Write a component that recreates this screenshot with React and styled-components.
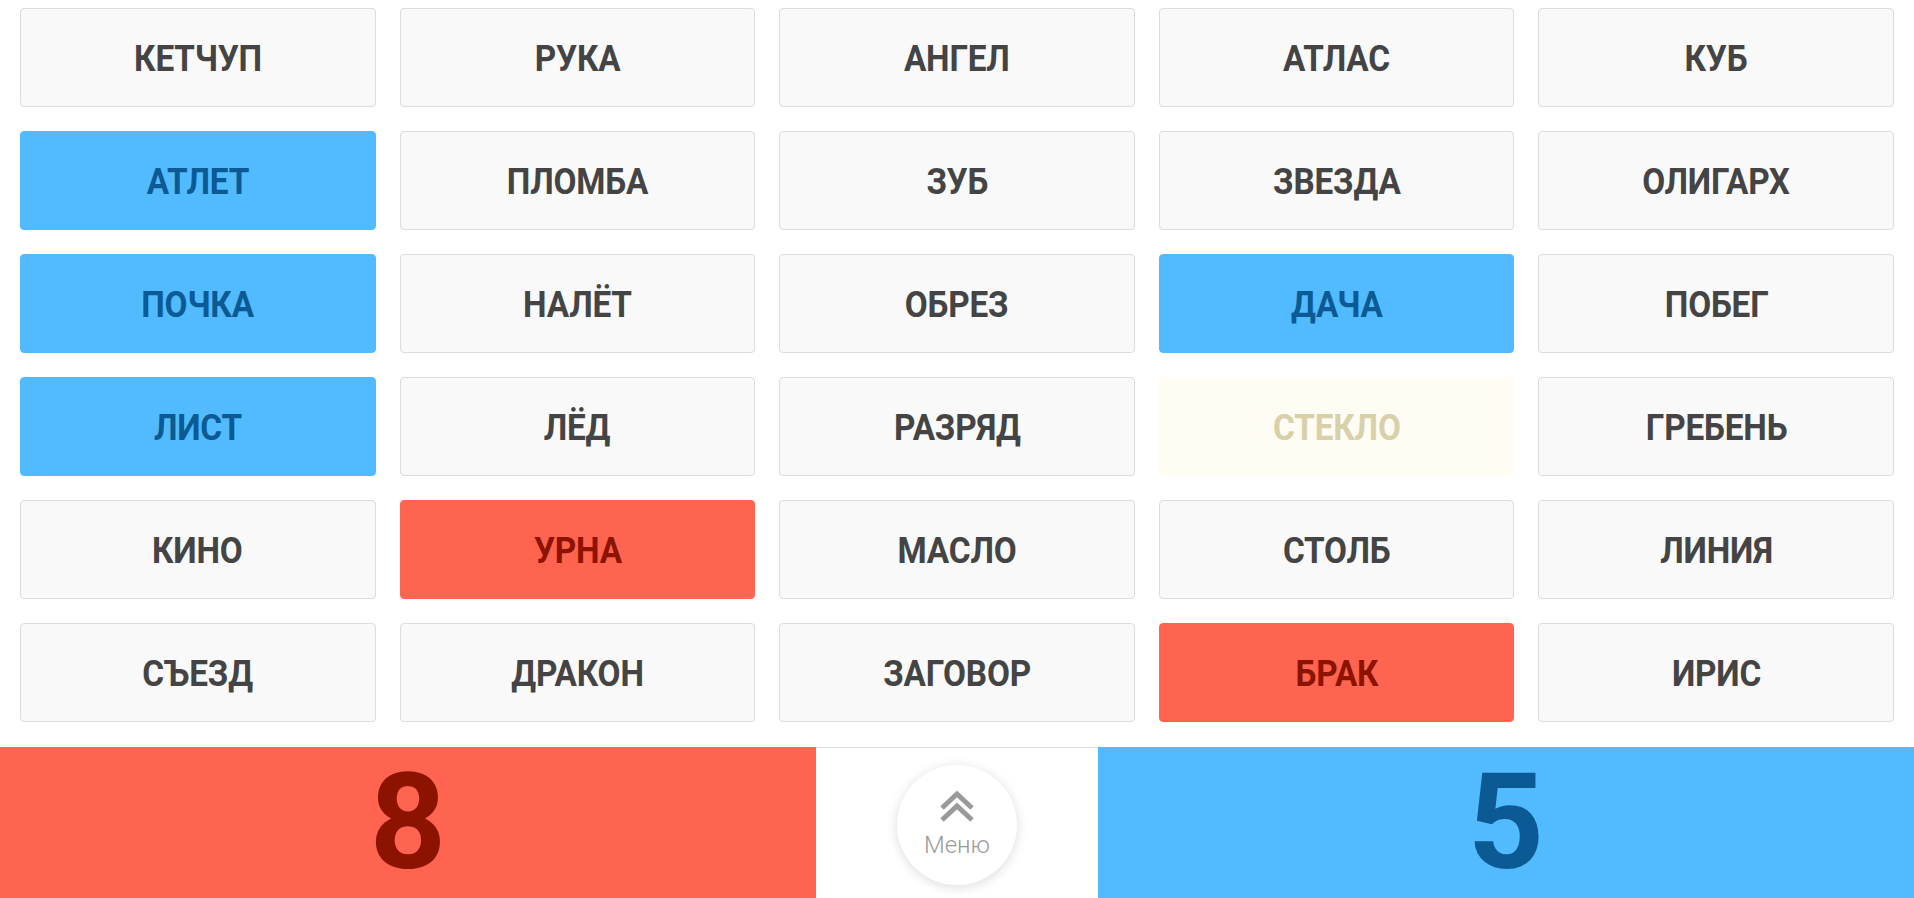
import styled, { createGlobalStyle } from 'styled-components';

const GlobalStyle = createGlobalStyle`
  html, body {
    margin: 0;
    padding: 0;
    background: #fff;
  }
  body {
    font-family: Roboto, "Noto Sans", "DejaVu Sans", sans-serif;
  }
  * {
    box-sizing: border-box;
  }
`;

const words = [
  ['КЕТЧУП', null], ['РУКА', null], ['АНГЕЛ', null], ['АТЛАС', null], ['КУБ', null],
  ['АТЛЕТ', 'blue'], ['ПЛОМБА', null], ['ЗУБ', null], ['ЗВЕЗДА', null], ['ОЛИГАРХ', null],
  ['ПОЧКА', 'blue'], ['НАЛЁТ', null], ['ОБРЕЗ', null], ['ДАЧА', 'blue'], ['ПОБЕГ', null],
  ['ЛИСТ', 'blue'], ['ЛЁД', null], ['РАЗРЯД', null], ['СТЕКЛО', 'neutral'], ['ГРЕБЕНЬ', null],
  ['КИНО', null], ['УРНА', 'red'], ['МАСЛО', null], ['СТОЛБ', null], ['ЛИНИЯ', null],
  ['СЪЕЗД', null], ['ДРАКОН', null], ['ЗАГОВОР', null], ['БРАК', 'red'], ['ИРИС', null],
];

const cardColors = {
  default: { bg: '#f9f9f9', border: '#dcdcdc', text: '#444444' },
  blue: { bg: '#52baff', border: '#52baff', text: '#0b5a93' },
  red: { bg: '#ff6451', border: '#ff6451', text: '#8c1300' },
  neutral: { bg: '#fffcf4', border: '#fffcf4', text: '#d8d0a9' },
};

const App = () => {
  return (
    <Page>
      <GlobalStyle />
      <Board>
        {words.map(([word, team]) => (
          <Card key={word} team={team || 'default'}>
            <Word>{word}</Word>
          </Card>
        ))}
      </Board>
      <Footer>
        <Score side="red">8</Score>
        <MenuArea>
          <MenuButton>
            <ChevronIcon />
            <MenuLabel>Меню</MenuLabel>
          </MenuButton>
        </MenuArea>
        <Score side="blue">5</Score>
      </Footer>
    </Page>
  );
};

const ChevronIcon = () => (
  <svg width="34" height="32" viewBox="0 0 34 32" fill="none">
    <polyline points="2,17 17,3 32,17" stroke="#9a9a9a" strokeWidth="5" />
    <polyline points="2,29 17,15 32,29" stroke="#9a9a9a" strokeWidth="5" />
  </svg>
);

const Page = styled.div`
  width: 100%;
  height: 898px;
  display: flex;
  flex-direction: column;
  overflow: hidden;
`;

const Board = styled.div`
  display: grid;
  grid-template-columns: repeat(5, 1fr);
  column-gap: 24px;
  row-gap: 24px;
  padding: 8px 20px 25px;
`;

const Card = styled.div`
  height: 99px;
  display: flex;
  align-items: center;
  justify-content: center;
  border-radius: 4px;
  border: 1px solid ${(p) => cardColors[p.team].border};
  background: ${(p) => cardColors[p.team].bg};
  color: ${(p) => cardColors[p.team].text};
  font-family: Roboto, sans-serif;
  font-weight: 700;
  font-size: 37px;
  padding-top: 2px;
`;

// the original face is a condensed bold; squeeze Roboto to the same width
const Word = styled.span`
  display: inline-block;
  transform: scaleX(0.9);
  letter-spacing: -0.2px;
`;

const Footer = styled.div`
  height: 151px;
  display: flex;
`;

const Score = styled.div`
  flex: 1;
  display: flex;
  align-items: center;
  justify-content: center;
  background: ${(p) => (p.side === 'red' ? '#ff6451' : '#52baff')};
  color: ${(p) => (p.side === 'red' ? '#8c1300' : '#0b5a93')};
  font-family: Roboto, sans-serif;
  font-weight: 700;
  font-size: 133px;
  line-height: 1.1;
  padding-top: 2px;
`;

const MenuArea = styled.div`
  width: 282px;
  display: flex;
  justify-content: center;
  border-top: 1px solid #dddddd;
  padding-top: 17px;
`;

const MenuButton = styled.div`
  width: 120px;
  height: 120px;
  border-radius: 50%;
  background: #fff;
  box-shadow: 0 2px 12px rgba(0, 0, 0, 0.14);
  display: flex;
  flex-direction: column;
  align-items: center;
  padding-top: 26px;
  cursor: pointer;
`;

const MenuLabel = styled.div`
  margin-top: 10px;
  font-family: Roboto, sans-serif;
  font-weight: 300;
  font-size: 24px;
  color: #9a9a9a;
  line-height: 1;
`;

export default App;
